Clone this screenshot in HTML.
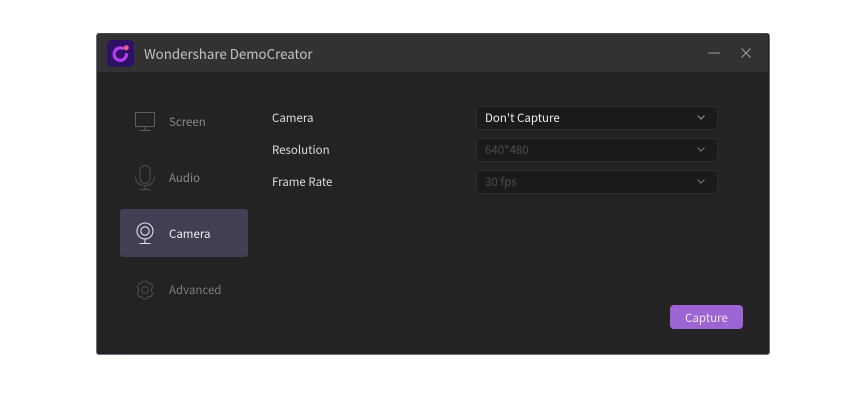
<!DOCTYPE html>
<html><head><meta charset="utf-8"><style>
html,body{margin:0;padding:0;background:#fff;width:850px;height:401px;overflow:hidden}
body{position:relative;font-family:"Noto Sans CJK SC","Liberation Sans",sans-serif}
.abs,.t{position:absolute}
.t{white-space:nowrap;line-height:16px;font-size:11.5px}
.win{left:96px;top:33px;width:672px;height:320px;background:#232323;border:1px solid #746a88;border-top-color:#4a4650;border-radius:3px;overflow:hidden}
.bar{left:97px;top:34px;width:671px;height:38px;background:#323232;border-radius:2px 2px 0 0}
.sel{left:476px;width:240px;height:22px;background:#1b1b1b;border:1px solid #2d2d2d;border-radius:4px}
.side{left:120px;top:209px;width:128px;height:48px;background:#433e53;border-radius:3px}
.btn{left:670px;top:305px;width:73px;height:24px;background:#9d64d3;border-radius:4px;color:#f0e6f8;text-align:center;line-height:26px;font-size:11.5px}
svg{position:absolute;overflow:visible}
</style></head><body>
<div class="abs win"></div>
<div class="abs bar"></div>

<svg style="left:107px;top:40px" width="27" height="27" viewBox="0 0 27 27">
<rect width="27" height="27" rx="5" fill="#2e1065"/>
<path d="M15.500 8.300A6.200 6.200 0 1 0 19.500 14.500" fill="none" stroke="#b43df0" stroke-width="3.200" stroke-linecap="round"/>
<circle cx="19.300" cy="7.800" r="2.500" fill="#f25a8e"/>
</svg>
<div class="t" style="left:144px;top:45px;font-size:13.3px;line-height:18px;color:#c4c4c4">Wondershare DemoCreator</div>

<svg style="left:708px;top:48px" width="12" height="10"><path d="M0 5H12" stroke="#777" stroke-width="1.500"/></svg>
<svg style="left:741px;top:48px" width="10" height="10"><path d="M.5 .5L9.500 9.500M9.500 .5L.5 9.500" stroke="#999" stroke-width="1.200"/></svg>

<div class="abs side"></div>

<svg style="left:135px;top:112px" width="20" height="19" fill="none" stroke="#5e5e5e" stroke-width="1">
<rect x=".5" y=".5" width="19" height="14"/><path d="M10 15V18M4.500 18.500H15.500"/></svg>
<div class="t" style="left:169px;top:114px;color:#8a8a8a">Screen</div>

<svg style="left:135px;top:165px" width="20" height="25" fill="none" stroke="#4f4f4f" stroke-width="1">
<rect x="5" y=".5" width="10" height="18" rx="5"/><path d="M.5 11.500C.5 18 5 20.500 10 20.500S19.500 18 19.500 11.500M10 20.500V24M5 24.500H15"/></svg>
<div class="t" style="left:169px;top:170px;color:#8a8a8a">Audio</div>

<svg style="left:136px;top:222px" width="18" height="23" fill="none" stroke="#e2e2e2" stroke-width="1.100">
<circle cx="9" cy="9" r="8"/><circle cx="9" cy="9" r="4.200"/><path d="M9 17V21.500M3.500 21.500H14.500"/></svg>
<div class="t" style="left:169px;top:226px;color:#efefef">Camera</div>

<svg style="left:136px;top:280px" width="18" height="20" fill="none" stroke="#4d4d4d" stroke-width="1">
<path d="M6.500 1.500L9 .8L11.500 1.500L12.500 3.500L15 3.500L16.800 6.500L15.500 8.500V11.500L16.800 13.500L15 16.500L12.500 16.500L11.500 18.500L9 19.200L6.500 18.500L5.500 16.500L3 16.500L1.200 13.500L2.500 11.500V8.500L1.200 6.500L3 3.500L5.500 3.500Z"/><circle cx="9" cy="10" r="3.400"/></svg>
<div class="t" style="left:169px;top:282px;color:#7c7c7c">Advanced</div>

<div class="t" style="left:272px;top:110px;color:#dedede">Camera</div>
<div class="t" style="left:272px;top:142px;color:#dedede">Resolution</div>
<div class="t" style="left:272px;top:174px;color:#dedede">Frame Rate</div>

<div class="abs sel" style="top:106px"></div>
<div class="abs sel" style="top:138px"></div>
<div class="abs sel" style="top:170px"></div>
<div class="t" style="left:485px;top:110px;color:#ececec">Don't Capture</div>
<div class="t" style="left:485px;top:142px;color:#4c4c4c">640*480</div>
<div class="t" style="left:485px;top:174px;color:#4c4c4c">30 fps</div>
<svg style="left:697px;top:115px" width="8" height="5"><path d="M.5 .5L4 4L7.500 .5" fill="none" stroke="#9a9a9a" stroke-width="1"/></svg>
<svg style="left:697px;top:147px" width="8" height="5"><path d="M.5 .5L4 4L7.500 .5" fill="none" stroke="#7a7a7a" stroke-width="1"/></svg>
<svg style="left:697px;top:179px" width="8" height="5"><path d="M.5 .5L4 4L7.500 .5" fill="none" stroke="#7a7a7a" stroke-width="1"/></svg>

<div class="abs btn">Capture</div>
</body></html>
